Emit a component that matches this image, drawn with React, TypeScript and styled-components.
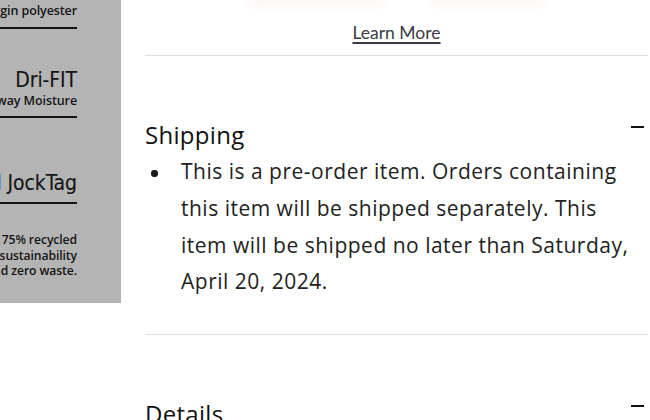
import React from "react";
import styled, { createGlobalStyle } from "styled-components";

const Global = createGlobalStyle`
  html, body { margin: 0; padding: 0; background: #fff; }
  body { width: 650px; height: 420px; overflow: hidden; }
  * { box-sizing: border-box; }
`;

const Page = styled.div`
  display: flex;
  align-items: flex-start;
  gap: 24px;
  width: 650px;
  height: 420px;
  overflow: hidden;
`;

const Promo = styled.aside`
  flex: 0 0 121px;
  height: 303px;
  background: #b4b4b4;
  overflow: hidden;
  display: flex;
  justify-content: flex-end;
  padding-right: 44px;
  font-family: "Open Sans", "Noto Sans", sans-serif;
  color: #151515;
`;

const PromoColumn = styled.div`
  flex: 0 0 auto;
  width: 230px;
  display: flex;
  flex-direction: column;
  align-items: flex-end;
  text-align: right;
  white-space: nowrap;
`;

const Feature = styled.div<{ $top: number; $bottom: number }>`
  width: 100%;
  display: flex;
  flex-direction: column;
  align-items: flex-end;
  padding-top: ${(p) => p.$top}px;
  padding-bottom: ${(p) => p.$bottom}px;
  border-bottom: 2px solid #141414;
`;

const FeatureTitle = styled.div`
  font-family: "DejaVu Sans Condensed", "Liberation Sans Narrow", Roboto, sans-serif;
  font-size: 21px;
  line-height: 26px;
  font-weight: 400;
  letter-spacing: -0.1px;
  -webkit-text-stroke: 0.15px #151515;
`;

const FeatureText = styled.div`
  font-size: 12.5px;
  line-height: 15px;
  font-weight: 600;
  letter-spacing: -0.1px;
`;

const PromoNote = styled.p`
  margin: 28px 0 0;
  font-size: 12.2px;
  line-height: 15.5px;
  font-weight: 600;
  letter-spacing: -0.1px;
`;

const Main = styled.main`
  flex: 1;
  min-width: 0;
  padding-right: 2px;
  font-family: "Open Sans", "Noto Sans", sans-serif;
  color: #222;
`;

const Teaser = styled.div`
  height: 12px;
  display: flex;
  justify-content: center;
  gap: 40px;
  filter: blur(3px);
  opacity: 0.1;
`;

const TeaserBlob = styled.span<{ $w: number }>`
  display: block;
  width: ${(p) => p.$w}px;
  height: 6px;
  background: #f0a8a8;
  border-radius: 3px;
`;

const LearnRow = styled.div`
  display: flex;
  justify-content: center;
  padding-top: 9px;
  height: 43px;
`;

const LearnMore = styled.a`
  font-family: Lato, "Liberation Sans", sans-serif;
  font-size: 17.5px;
  line-height: 24px;
  color: #3a3a46;
  text-decoration: underline;
  text-decoration-thickness: 1.5px;
  text-underline-offset: 3px;
`;

const Section = styled.section`
  border-top: 1px solid #dedede;
  padding-top: 64px;
  padding-bottom: 34px;
`;

const SectionHeader = styled.div`
  display: flex;
  align-items: flex-start;
  justify-content: space-between;
`;

const SectionTitle = styled.h2`
  margin: 0;
  font-size: 24px;
  line-height: 29px;
  font-weight: 500;
  letter-spacing: 0.3px;
  color: #111;
`;

const Toggle = styled.span`
  display: block;
  width: 13px;
  height: 2px;
  margin: 6px 4px 0 0;
  background: #111;
`;

const List = styled.ul`
  list-style: none;
  margin: 4px 0 0;
  padding: 0 12px 0 0;
`;

const Item = styled.li`
  display: grid;
  grid-template-columns: 36px 1fr;
  font-size: 21px;
  line-height: 36.75px;
  letter-spacing: 0.5px;
  &::before {
    content: "";
    width: 6.5px;
    height: 6.5px;
    margin: 17px 0 0 6px;
    border-radius: 50%;
    background: #1a1a1a;
  }
`;

export default function App() {
  return (
    <>
      <Global />
      <Page>
        <Promo>
          <PromoColumn>
            <Feature $top={3} $bottom={9}>
              <FeatureText>Made from 100% virgin polyester</FeatureText>
            </Feature>
            <Feature $top={38} $bottom={8}>
              <FeatureTitle>Dri-FIT</FeatureTitle>
              <FeatureText>Wicks Away Moisture</FeatureText>
            </Feature>
            <Feature $top={52} $bottom={6}>
              <FeatureTitle>Embroidered JockTag</FeatureTitle>
            </Feature>
            <PromoNote>
              Made with at least 75% recycled
              <br />
              materials for sustainability
              <br />
              and zero waste.
            </PromoNote>
          </PromoColumn>
        </Promo>
        <Main>
          <Teaser>
            <TeaserBlob $w={140} />
            <TeaserBlob $w={120} />
          </Teaser>
          <LearnRow>
            <LearnMore href="#">Learn More</LearnMore>
          </LearnRow>
          <Section>
            <SectionHeader>
              <SectionTitle>Shipping</SectionTitle>
              <Toggle />
            </SectionHeader>
            <List>
              <Item>
                <span>
                  This is a pre-order item. Orders containing this item will be
                  shipped separately. This item will be shipped no later than
                  Saturday, April 20, 2024.
                </span>
              </Item>
            </List>
          </Section>
          <Section>
            <SectionHeader>
              <SectionTitle>Details</SectionTitle>
              <Toggle />
            </SectionHeader>
          </Section>
        </Main>
      </Page>
    </>
  );
}
